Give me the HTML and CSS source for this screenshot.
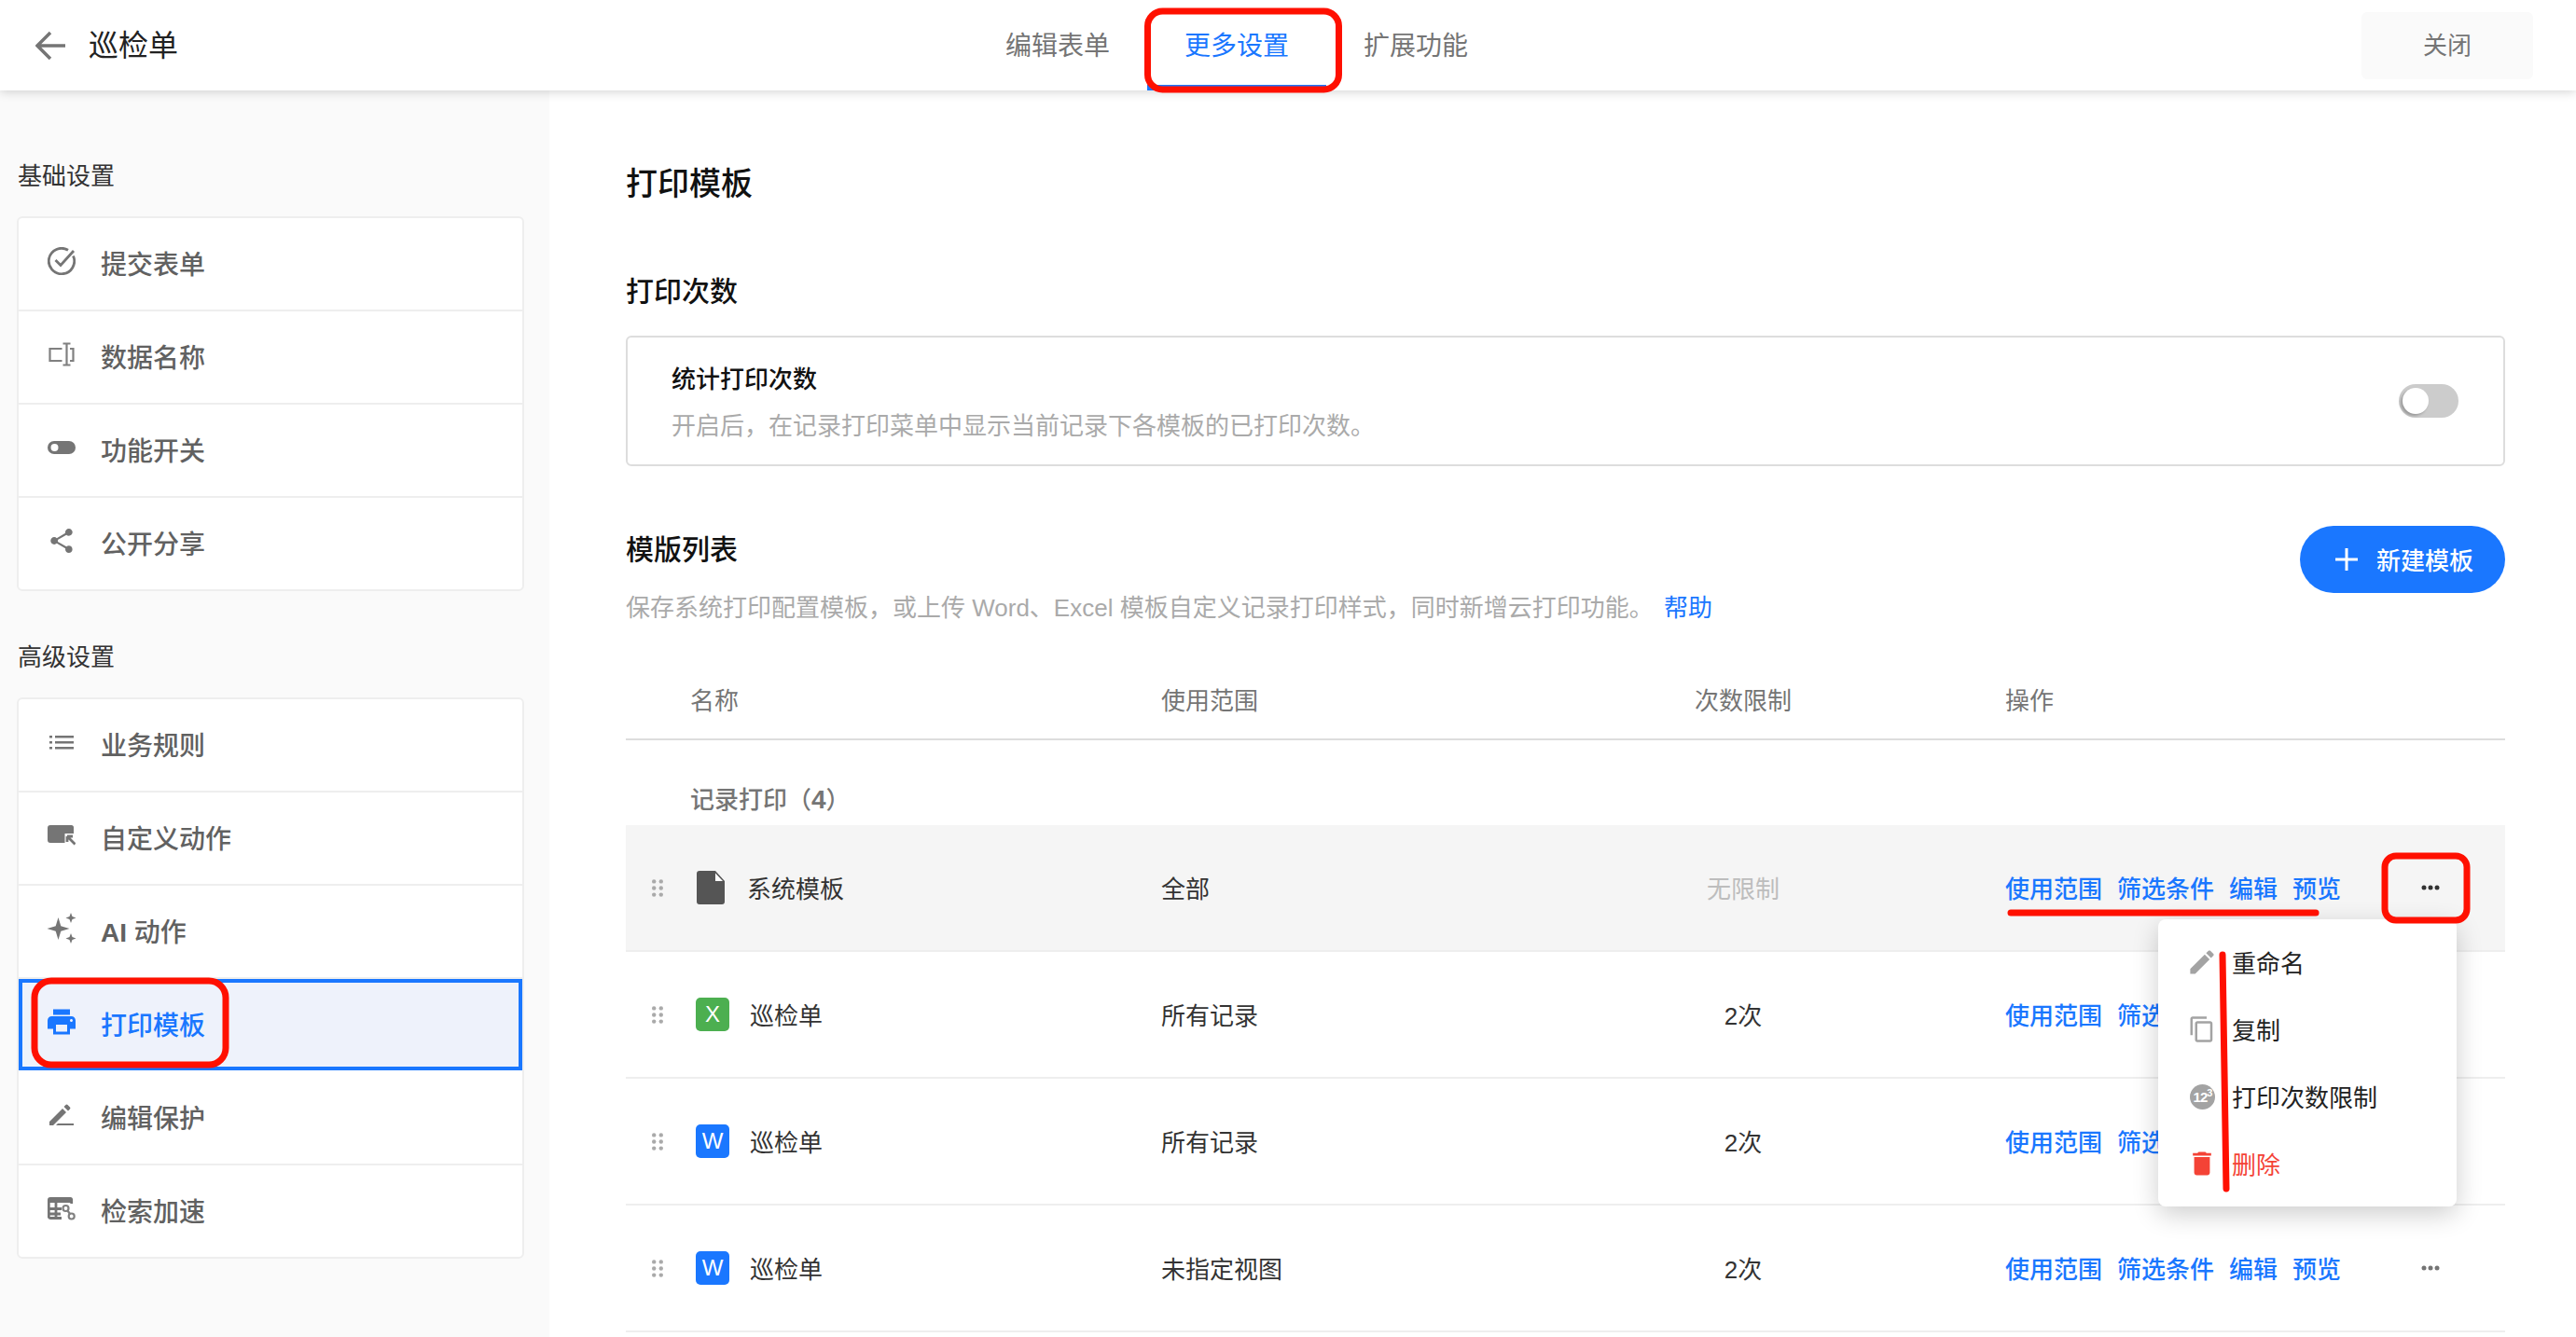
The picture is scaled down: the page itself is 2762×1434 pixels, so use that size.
FILE: index.html
```html
<!DOCTYPE html>
<html lang="zh-CN">
<head>
<meta charset="utf-8">
<title>巡检单</title>
<link rel="stylesheet" href="styles.css">
</head>
<body>
<div class="page">
  <header class="topbar">
    <div class="topbar-left">
      <svg class="back" viewBox="0 0 32 32"><path d="M32 16H3M16 2L2 16l14 14"/></svg>
      <span class="app-title">巡检单</span>
    </div>
    <nav class="tabs">
      <span class="tab">编辑表单</span>
      <span class="tab tab-active">更多设置</span>
      <span class="tab">扩展功能</span>
    </nav>
    <button class="close">关闭</button>
  </header>

  <div class="body">
    <aside class="sidebar">
      <div class="side-label">基础设置</div>
      <div class="side-card">
        <div class="side-row">
          <svg class="icon" viewBox="0 0 30 30"><path class="line" d="M27.500 9.500A13.700 13.700 0 1 1 22 3.300"/><path class="line" d="M8.500 14l5.500 5.500L28 4"/></svg>
          <span>提交表单</span>
        </div>
        <div class="side-row">
          <svg class="icon" viewBox="0 0 30 30"><path class="thin" d="M15.500 9H2.500v13h13M24 9h3.500v13H24M16.500 3.500h8M16.500 26.500h8M20.500 3.500v23"/></svg>
          <span>数据名称</span>
        </div>
        <div class="side-row">
          <svg class="icon" viewBox="0 0 30 30"><rect y="8" width="30" height="14" rx="7"/><circle cx="7.500" cy="15" r="4" fill="#fff"/></svg>
          <span>功能开关</span>
        </div>
        <div class="side-row">
          <svg class="icon" viewBox="0.500 0.500 23 23"><path d="M18 16.080c-.76 0-1.440.3-1.960.77L8.910 12.700c.05-.23.09-.46.09-.7s-.04-.47-.09-.7l7.050-4.110c.54.5 1.250.81 2.040.81 1.660 0 3-1.340 3-3s-1.340-3-3-3-3 1.340-3 3c0 .24.04.47.09.7L8.040 9.810C7.500 9.310 6.790 9 6 9c-1.660 0-3 1.340-3 3s1.340 3 3 3c.79 0 1.500-.31 2.040-.81l7.120 4.160c-.05.21-.08.43-.08.65 0 1.610 1.310 2.920 2.920 2.920 1.610 0 2.920-1.310 2.920-2.920s-1.310-2.920-2.920-2.920z"/></svg>
          <span>公开分享</span>
        </div>
      </div>

      <div class="side-label side-label-next">高级设置</div>
      <div class="side-card">
        <div class="side-row">
          <svg class="icon" viewBox="0 0 30 30"><path d="M2 8h3v2.500H2zM8 8h20v2.500H8zM2 14h3v2.500H2zM8 14h20v2.500H8zM2 20h3v2.500H2zM8 20h20v2.500H8z"/></svg>
          <span>业务规则</span>
        </div>
        <div class="side-row">
          <svg class="icon" viewBox="0 0 30 30"><path d="M3 4h22.500a2.500 2.500 0 0 1 2.500 2.500V13h-9.500v10H3a3 3 0 0 1-3-3V7a3 3 0 0 1 3-3z"/><path class="line" d="M21 16h6M21 16v6M21 16l8.500 8.500"/></svg>
          <span>自定义动作</span>
        </div>
        <div class="side-row">
          <svg class="icon icon-free" viewBox="0 0 30 30"><path d="M11.500 3l2.800 9.200 9.200 2.800-9.200 2.800L11.500 27l-2.800-9.200L-.5 15l9.200-2.800zM25 -2l1.500 4 4 1.500-4 1.500L25 9l-1.500-4-4-1.500 4-1.500zM25 20l1.500 4 4 1.500-4 1.500L25 31l-1.500-4-4-1.500 4-1.500z"/></svg>
          <span><b class="ai">AI</b> 动作</span>
        </div>
        <div class="side-row side-row-active">
          <svg class="icon" viewBox="2 2 20 20"><path d="M19 8H5c-1.660 0-3 1.340-3 3v6h4v4h12v-4h4v-6c0-1.660-1.340-3-3-3zm-3 11H8v-5h8v5zm3-7c-.55 0-1-.45-1-1s.45-1 1-1 1 .45 1 1-.45 1-1 1zm-1-9H6v4h12V3z"/></svg>
          <span>打印模板</span>
        </div>
        <div class="side-row">
          <svg class="icon" viewBox="0 0 30 30"><path d="M2 22v4h4L20 12l-4-4zM24 8.500a1.500 1.500 0 0 0 0-2L21.500 4a1.500 1.500 0 0 0-2 0l-2 2 4.500 4.500zM11 24h17v2H9z"/></svg>
          <span>编辑保护</span>
        </div>
        <div class="side-row">
          <svg class="icon" viewBox="0 0 30 30"><path d="M3 3h21.500A2.500 2.500 0 0 1 27 5.500V9H0V6a3 3 0 0 1 3-3z"/><path class="line" d="M15 25.500H3a1.700 1.700 0 0 1-1.700-1.700V6M1 15.500h14M1 21h13M9 6v19M25.700 5v5"/><circle class="thin" cx="19.500" cy="15" r="3"/><circle class="thin" cx="25.700" cy="23.500" r="3"/><path class="thin" d="M21.500 17.500l2.500 3.500"/></svg>
          <span>检索加速</span>
        </div>
      </div>
    </aside>

    <main class="main">
      <h1 class="page-title">打印模板</h1>
      <h2 class="sub-title sub-first">打印次数</h2>
      <section class="count-card">
        <div class="count-text">
          <div class="count-name">统计打印次数</div>
          <div class="muted">开启后，在记录打印菜单中显示当前记录下各模板的已打印次数。</div>
        </div>
        <span class="toggle"><span class="knob"></span></span>
      </section>

      <section class="list-head">
        <div class="list-text">
          <h2 class="sub-title">模版列表</h2>
          <div class="muted">保存系统打印配置模板，或上传 Word、Excel 模板自定义记录打印样式，同时新增云打印功能。 <a class="help">帮助</a></div>
        </div>
        <button class="new-btn">
          <svg class="plus" viewBox="0 0 26 26"><path d="M13 1v24M1 13h24"/></svg>
          <span>新建模板</span>
        </button>
      </section>

      <div class="grid-row table-head">
        <span class="col-name-head">名称</span>
        <span>使用范围</span>
        <span class="col-count">次数限制</span>
        <span class="col-ops">操作</span>
      </div>
      <div class="group-label">记录打印（<b class="group-count">4</b>）</div>

      <div class="grid-row data-row data-row-hover">
        <div class="col-name">
          <svg class="drag" viewBox="0 0 12 19"><circle cx="2.200" cy="2.400" r="2.200"/><circle cx="9.800" cy="2.400" r="2.200"/><circle cx="2.200" cy="9.500" r="2.200"/><circle cx="9.800" cy="9.500" r="2.200"/><circle cx="2.200" cy="16.600" r="2.200"/><circle cx="9.800" cy="16.600" r="2.200"/></svg>
          <svg class="doc" viewBox="0 0 36 36"><path d="M4 0h17l10 11v22a3 3 0 0 1-3 3H4a3 3 0 0 1-3-3V3a3 3 0 0 1 3-3z"/><path class="doc-fold" d="M21 2.500V11h8z"/></svg>
          <span class="cell name-doc">系统模板</span>
        </div>
        <span class="cell">全部</span>
        <span class="cell col-count faint">无限制</span>
        <div class="col-ops ops">
          <a>使用范围</a><a>筛选条件</a><a>编辑</a><a>预览</a>
          <svg class="more more-dark" viewBox="0 0 20 6"><circle cx="3" cy="3" r="2.500"/><circle cx="10" cy="3" r="2.500"/><circle cx="17" cy="3" r="2.500"/></svg>
        </div>
      </div>

      <div class="grid-row data-row">
        <div class="col-name">
          <svg class="drag" viewBox="0 0 12 19"><circle cx="2.200" cy="2.400" r="2.200"/><circle cx="9.800" cy="2.400" r="2.200"/><circle cx="2.200" cy="9.500" r="2.200"/><circle cx="9.800" cy="9.500" r="2.200"/><circle cx="2.200" cy="16.600" r="2.200"/><circle cx="9.800" cy="16.600" r="2.200"/></svg>
          <span class="file file-x">X</span>
          <span class="cell name">巡检单</span>
        </div>
        <span class="cell">所有记录</span>
        <span class="cell col-count">2次</span>
        <div class="col-ops ops"><a>使用范围</a><a>筛选条件</a></div>
      </div>

      <div class="grid-row data-row">
        <div class="col-name">
          <svg class="drag" viewBox="0 0 12 19"><circle cx="2.200" cy="2.400" r="2.200"/><circle cx="9.800" cy="2.400" r="2.200"/><circle cx="2.200" cy="9.500" r="2.200"/><circle cx="9.800" cy="9.500" r="2.200"/><circle cx="2.200" cy="16.600" r="2.200"/><circle cx="9.800" cy="16.600" r="2.200"/></svg>
          <span class="file file-w">W</span>
          <span class="cell name">巡检单</span>
        </div>
        <span class="cell">所有记录</span>
        <span class="cell col-count">2次</span>
        <div class="col-ops ops"><a>使用范围</a><a>筛选条件</a></div>
      </div>

      <div class="grid-row data-row">
        <div class="col-name">
          <svg class="drag" viewBox="0 0 12 19"><circle cx="2.200" cy="2.400" r="2.200"/><circle cx="9.800" cy="2.400" r="2.200"/><circle cx="2.200" cy="9.500" r="2.200"/><circle cx="9.800" cy="9.500" r="2.200"/><circle cx="2.200" cy="16.600" r="2.200"/><circle cx="9.800" cy="16.600" r="2.200"/></svg>
          <span class="file file-w">W</span>
          <span class="cell name">巡检单</span>
        </div>
        <span class="cell">未指定视图</span>
        <span class="cell col-count">2次</span>
        <div class="col-ops ops">
          <a>使用范围</a><a>筛选条件</a><a>编辑</a><a>预览</a>
          <svg class="more" viewBox="0 0 20 6"><circle cx="3" cy="3" r="2.500"/><circle cx="10" cy="3" r="2.500"/><circle cx="17" cy="3" r="2.500"/></svg>
        </div>
      </div>
    </main>
  </div>

  <div class="menu">
    <div class="menu-item">
      <svg class="menu-icon" viewBox="1.300 1.300 21.400 21.400"><path d="M3 17.250V21h3.750L17.810 9.940l-3.750-3.750L3 17.250zM20.710 7.040c.39-.39.39-1.020 0-1.410l-2.340-2.340c-.39-.39-1.020-.39-1.410 0l-1.830 1.830 3.750 3.750 1.830-1.830z"/></svg>
      <span>重命名</span>
    </div>
    <div class="menu-item">
      <svg class="menu-icon" viewBox="0 0 24 24"><path d="M16 1H4c-1.100 0-2 .9-2 2v14h2V3h12V1zm3 4H8c-1.100 0-2 .9-2 2v14c0 1.100.9 2 2 2h11c1.100 0 2-.9 2-2V7c0-1.100-.9-2-2-2zm0 16H8V7h11v14z"/></svg>
      <span>复制</span>
    </div>
    <div class="menu-item">
      <span class="badge-123">12<sup>3</sup></span>
      <span>打印次数限制</span>
    </div>
    <div class="menu-item menu-danger">
      <svg class="menu-icon" viewBox="1.300 1.300 21.400 21.400"><path d="M6 19c0 1.100.9 2 2 2h8c1.100 0 2-.9 2-2V7H6v12zM19 4h-3.500l-1-1h-5l-1 1H5v2h14V4z"/></svg>
      <span>删除</span>
    </div>
  </div>

  <svg class="marks" viewBox="0 0 2762 1434">
    <rect x="1230.500" y="12" width="205" height="84" rx="16"/>
    <rect x="37" y="1052" width="205" height="90" rx="18"/>
    <rect x="2557" y="918" width="88" height="69" rx="12"/>
    <path d="M2156 979H2483"/>
    <path d="M2383 1024L2387 1275"/>
  </svg>
</div>
</body>
</html>
```

FILE: styles.css
```css
* { box-sizing: border-box; }
html, body { margin: 0; padding: 0; background: #fff; }
body {
  font-family: "Liberation Sans", "Noto Sans CJK SC", sans-serif;
  font-size: 26px;
  line-height: 36px;
  color: #333;
}
.page { position: relative; width: 2762px; height: 1434px; overflow: hidden; }

/* top bar */
.topbar {
  position: relative;
  z-index: 2;
  display: flex;
  align-items: center;
  height: 97px;
  padding: 0 46px 0 38px;
  background: #fff;
  box-shadow: 0 2px 10px rgba(0, 0, 0, .16);
}
.topbar-left { display: flex; align-items: center; gap: 25px; width: 1000px; }
.back { width: 32px; height: 32px; fill: none; stroke: #757575; stroke-width: 3.5; }
.app-title { font-size: 32px; line-height: 44px; color: #222; }
.tabs { display: flex; }
.tab {
  display: flex;
  align-items: center;
  justify-content: center;
  width: 192px;
  height: 97px;
  padding-top: 2px;
  font-size: 28px;
  color: #757575;
}
.tab-active { color: #1a77ff; box-shadow: inset 0 -6px 0 #1a77ff; }
.close {
  width: 184px;
  height: 72px;
  margin-left: auto;
  border: 0;
  border-radius: 6px;
  background: #fafafa;
  color: #757575;
  font: inherit;
}

/* layout */
.body { display: flex; height: 1337px; }
.sidebar { flex: 0 0 589px; padding: 74px 27px 0 18px; background: #fafafa; }
.main { flex: 1; padding: 78px 76px 0 82px; }

/* sidebar */
.side-label { margin-bottom: 25px; padding-left: 1px; color: #333; }
.side-label-next { margin-top: 53px; margin-bottom: 25px; }
.side-card { border: 2px solid #eee; border-radius: 6px; background: #fff; }
.side-row {
  display: flex;
  align-items: center;
  gap: 27px;
  height: 100px;
  padding-left: 31px;
  border-bottom: 2px solid #eee;
  font-size: 28px;
  font-weight: 500;
  color: #616161;
}
.side-row span { padding-top: 4px; }
.side-row:last-child { height: 98px; border-bottom: 0; }
.side-row .icon { margin-bottom: 6px; }
.ai { font-weight: 700; }
.icon { flex: none; width: 30px; height: 30px; fill: #757575; }
.icon-free { overflow: visible; }
.icon .line { fill: none; stroke: #757575; stroke-width: 2.800; }
.icon .thin { fill: none; stroke: #808080; stroke-width: 2.200; }
.side-row-active {
  height: 98px;
  margin-bottom: 2px;
  padding-left: 27px;
  border: 4px solid #1a77ff;
  background: #eef2fb;
  color: #1a77ff;
}
.side-row-active .icon { fill: #1a77ff; }

/* main */
.page-title { margin: 0; font-size: 34px; line-height: 44px; font-weight: 500; color: #111; }
.sub-title { margin: 0; font-size: 30px; line-height: 40px; font-weight: 500; color: #111; }
.sub-first { margin: 74px 0 27px; }
.count-card {
  display: flex;
  align-items: center;
  justify-content: space-between;
  height: 140px;
  padding: 0 48px 0 47px;
  border: 2px solid #ddd;
  border-radius: 6px;
}
.count-text { display: flex; flex-direction: column; gap: 14px; padding-top: 4px; }
.count-name { font-weight: 500; color: #111; }
.muted { color: #aaa; }
.toggle {
  display: flex;
  align-items: center;
  width: 64px;
  height: 36px;
  padding-left: 4px;
  border-radius: 18px;
  background: #ccc;
}
.knob {
  width: 28px;
  height: 28px;
  border-radius: 50%;
  background: #fff;
  box-shadow: -2px 2px 3px rgba(0, 0, 0, .25);
}
.list-head {
  display: flex;
  justify-content: space-between;
  align-items: flex-start;
  margin-top: 64px;
}
.list-text { display: flex; flex-direction: column; gap: 24px; padding-top: 6px; }
.help { margin-left: 4px; color: #1a77ff; }
.new-btn {
  display: flex;
  align-items: center;
  gap: 19px;
  width: 220px;
  height: 72px;
  padding: 0 0 0 37px;
  border: 0;
  border-radius: 36px;
  background: #1a77ff;
  color: #fff;
  font: inherit;
  font-weight: 500;
}
.new-btn span { padding-top: 4px; }
.plus { width: 26px; height: 26px; fill: none; stroke: #fff; stroke-width: 3; }

/* table */
.grid-row {
  display: grid;
  grid-template-columns: 574px 520px 208px 1fr;
  align-items: center;
}
.table-head {
  height: 88px;
  margin-top: 36px;
  padding-top: 6px;
  border-bottom: 2px solid #ddd;
  color: #757575;
}
.col-name-head { padding-left: 69px; }
.col-count { text-align: center; }
.col-ops { padding-left: 177px; }
.group-label {
  height: 91px;
  padding: 44px 0 0 69px;
  font-family: "Noto Sans CJK SC", sans-serif;
  font-weight: 500;
  color: #757575;
}
.group-count { font-family: "Liberation Sans", sans-serif; font-weight: 700; font-size: 28px; line-height: 1; }
.data-row { height: 136px; border-bottom: 2px solid #eee; }
.data-row-hover { background: #f5f5f5; }
.col-name { display: flex; align-items: center; padding-left: 28px; }
.cell { padding-top: 4px; }
.drag { flex: none; width: 12px; height: 19px; margin-right: 35px; fill: #aaa; }
.doc { flex: none; width: 36px; height: 36px; fill: #555; }
.doc-fold { fill: #fff; }
.name-doc { margin-left: 19px; }
.name { margin-left: 22px; }
.file {
  display: flex;
  flex: none;
  align-items: center;
  justify-content: center;
  width: 36px;
  height: 36px;
  border-radius: 5px;
  color: #fff;
  font-size: 24px;
}
.file-x { background: #4caf50; }
.file-w { background: #1a77ff; }
.faint { color: #bdbdbd; }
.ops { display: flex; align-items: center; gap: 16px; color: #1a77ff; font-weight: 500; }
.ops a { padding-top: 4px; }
.more { width: 20px; height: 6px; margin-left: 70px; fill: #757575; }
.more-dark { fill: #333; }

/* dropdown */
.menu {
  position: absolute;
  z-index: 3;
  left: 2314px;
  top: 986px;
  width: 320px;
  height: 308px;
  padding-top: 10px;
  border-radius: 8px;
  background: #fff;
  box-shadow: 0 8px 28px rgba(0, 0, 0, .2);
}
.menu-item {
  display: flex;
  align-items: center;
  gap: 17px;
  height: 72px;
  padding-left: 32px;
  color: #222;
}
.menu-item > span:last-child { padding-top: 4px; }
.menu-icon { flex: none; width: 30px; height: 30px; fill: #a3a3a3; }
.menu-danger { color: #f44336; }
.menu-danger .menu-icon { fill: #f44336; }
.badge-123 {
  display: flex;
  flex: none;
  align-items: center;
  justify-content: center;
  width: 27px;
  height: 27px;
  margin: 0 1px 0 2px;
  border-radius: 50%;
  background: #a3a3a3;
  color: #fff;
  font-size: 15px;
  line-height: 15px;
  letter-spacing: -1px;
  font-weight: 700;
}
.badge-123 sup { font-size: 11px; line-height: 11px; align-self: flex-start; margin-top: 4px; }

/* hand-drawn annotations over the screenshot */
.marks {
  position: absolute;
  z-index: 4;
  left: 0;
  top: 0;
  width: 2762px;
  height: 1434px;
  fill: none;
  stroke: #ff1000;
  stroke-width: 7;
  stroke-linecap: round;
  pointer-events: none;
}
```
